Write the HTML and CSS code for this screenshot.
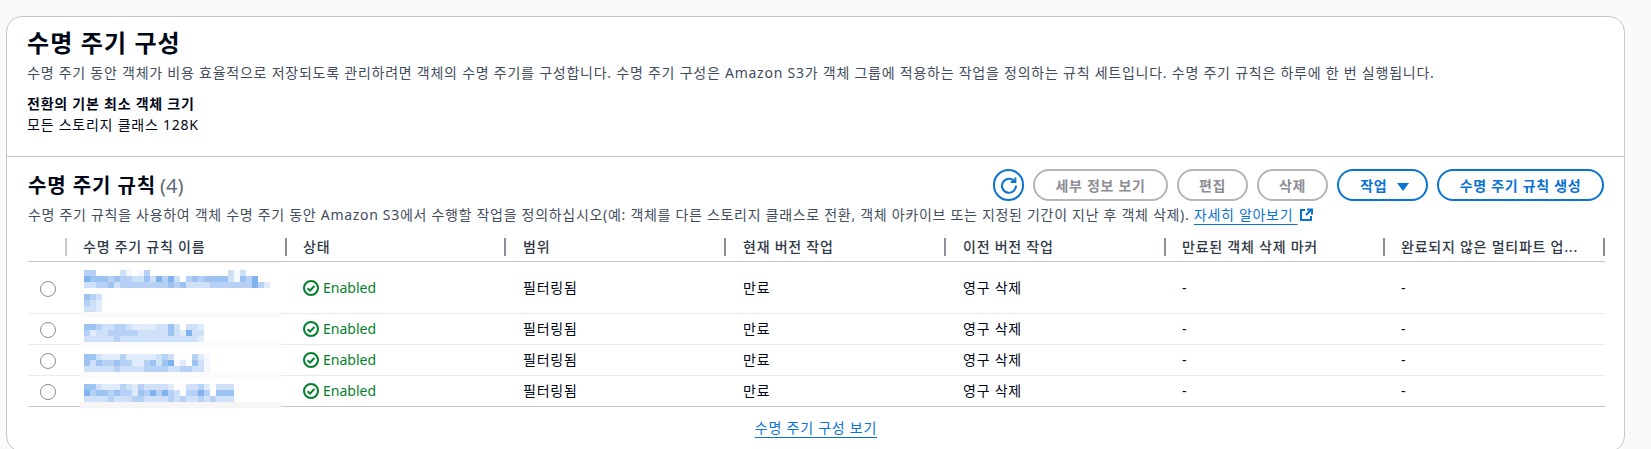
FILE: index.html

```html
<!DOCTYPE html>
<html lang="ko">
<head>
  <meta charset="UTF-8" />
  <meta name="viewport" content="width=device-width, initial-scale=1.0" />
  <title>수명 주기 구성</title>
  <link rel="stylesheet" href="styles.css">
</head>
<body>
  <div class="card">
    <div class="intro">
      <h1>수명 주기 구성</h1>
      <p class="desc">수명 주기 동안 객체가 비용 효율적으로 저장되도록 관리하려면 객체의 수명 주기를 구성합니다. 수명 주기 구성은 Amazon S3가 객체 그룹에 적용하는 작업을 정의하는 규칙 세트입니다. 수명 주기 규칙은 하루에 한 번 실행됩니다.</p>
      <div class="label">전환의 기본 최소 객체 크기</div>
      <div class="value">모든 스토리지 클래스 128K</div>
    </div>

    <div class="rules">
      <div class="rules-head">
        <h2>수명 주기 규칙 <span class="count">(4)</span></h2>
        <div class="actions">
          <button class="btn icon-btn" aria-label="새로 고침">
            <svg width="18" height="18" viewBox="0 0 18 18" fill="none" stroke="#0972d3" stroke-width="2"><path d="M14.6 5.6A7 7 0 1 0 16 9.5"/><path d="M15.4 1.5v4.6h-4.6" stroke-linejoin="miter"/></svg>
          </button>
          <button class="btn disabled details-btn">세부 정보 보기</button>
          <button class="btn disabled small-btn">편집</button>
          <button class="btn disabled small-btn">삭제</button>
          <button class="btn menu-btn">작업 <span class="caret"></span></button>
          <button class="btn create-btn">수명 주기 규칙 생성</button>
        </div>
      </div>
      <p class="desc rules-desc">수명 주기 규칙을 사용하여 객체 수명 주기 동안 Amazon S3에서 수행할 작업을 정의하십시오(예: 객체를 다른 스토리지 클래스로 전환, 객체 아카이브 또는 지정된 기간이 지난 후 객체 삭제). <a class="link" href="#">자세히 알아보기 </a><svg class="ext" width="14" height="14" viewBox="0 0 14 14" fill="none" stroke="#0972d3" stroke-width="2"><path d="M6 2H2v10h10V8"/><path d="M7 7l5.5-5.5M8 1.5h5v5"/></svg></p>

      <div class="table-wrap">
        <table class="rule-table">
          <colgroup>
            <col class="col-radio"><col class="col-wide"><col class="col-narrow"><col class="col-wide"><col class="col-wide"><col class="col-wide"><col class="col-narrow"><col class="col-wide">
          </colgroup>
          <thead>
            <tr>
              <th><span class="head-cell light"></span></th>
              <th><span class="head-cell">수명 주기 규칙 이름</span></th>
              <th><span class="head-cell">상태</span></th>
              <th><span class="head-cell nudge">범위</span></th>
              <th><span class="head-cell nudge">현재 버전 작업</span></th>
              <th><span class="head-cell nudge">이전 버전 작업</span></th>
              <th><span class="head-cell">만료된 객체 삭제 마커</span></th>
              <th><span class="head-cell">완료되지 않은 멀티파트 업...</span></th>
            </tr>
          </thead>
          <tbody>
            <tr class="tall">
              <td class="radio-cell"><span class="radio"></span></td>
              <td></td>
              <td><span class="status"><svg width="16" height="16" viewBox="0 0 16 16" fill="none" stroke="#037f2c" stroke-width="2"><circle cx="8" cy="8" r="7"/><path d="M4.6 8.2l2.4 2.4 4.4-4.6"/></svg>Enabled</span></td>
              <td class="nudge">필터링됨</td>
              <td class="nudge">만료</td>
              <td class="nudge">영구 삭제</td>
              <td>-</td>
              <td>-</td>
            </tr>
            <tr>
              <td class="radio-cell"><span class="radio"></span></td>
              <td></td>
              <td><span class="status"><svg width="16" height="16" viewBox="0 0 16 16" fill="none" stroke="#037f2c" stroke-width="2"><circle cx="8" cy="8" r="7"/><path d="M4.6 8.2l2.4 2.4 4.4-4.6"/></svg>Enabled</span></td>
              <td class="nudge">필터링됨</td>
              <td class="nudge">만료</td>
              <td class="nudge">영구 삭제</td>
              <td>-</td>
              <td>-</td>
            </tr>
            <tr>
              <td class="radio-cell"><span class="radio"></span></td>
              <td></td>
              <td><span class="status"><svg width="16" height="16" viewBox="0 0 16 16" fill="none" stroke="#037f2c" stroke-width="2"><circle cx="8" cy="8" r="7"/><path d="M4.6 8.2l2.4 2.4 4.4-4.6"/></svg>Enabled</span></td>
              <td class="nudge">필터링됨</td>
              <td class="nudge">만료</td>
              <td class="nudge">영구 삭제</td>
              <td>-</td>
              <td>-</td>
            </tr>
            <tr>
              <td class="radio-cell"><span class="radio"></span></td>
              <td></td>
              <td><span class="status"><svg width="16" height="16" viewBox="0 0 16 16" fill="none" stroke="#037f2c" stroke-width="2"><circle cx="8" cy="8" r="7"/><path d="M4.6 8.2l2.4 2.4 4.4-4.6"/></svg>Enabled</span></td>
              <td class="nudge">필터링됨</td>
              <td class="nudge">만료</td>
              <td class="nudge">영구 삭제</td>
              <td>-</td>
              <td>-</td>
            </tr>
          </tbody>
        </table>

        <!-- pixelated redaction laid over the rule names, coordinates are page pixels -->
        <svg class="mosaic" width="201" height="146" viewBox="80 262 201 146">
          <rect class="band" x="80" y="262" width="201" height="2"/>
          <rect class="band" x="80" y="312" width="201" height="6"/>
          <rect class="band" x="80" y="342" width="201" height="6"/>
          <rect class="band" x="80" y="372" width="201" height="6"/>
          <rect class="band dark" x="80" y="402" width="201" height="6"/>

          <rect class="b3" x="84" y="270" width="12"/><rect class="b2" x="120" y="270" width="6"/><rect class="b0" x="126" y="270" width="6"/><rect class="b0" x="138" y="270" width="6"/><rect class="b3" x="144" y="270" width="6"/><rect class="b2" x="228" y="270" width="6"/><rect class="b0" x="234" y="270" width="6"/><rect class="b2" x="240" y="270" width="6"/>
          <rect class="b5" x="84" y="276" width="6"/><rect class="b4" x="90" y="276" width="18"/><rect class="b3" x="108" y="276" width="6"/><rect class="b4" x="114" y="276" width="6"/><rect class="b3" x="120" y="276" width="12"/><rect class="b2" x="132" y="276" width="12"/><rect class="b4" x="144" y="276" width="6"/><rect class="b2" x="150" y="276" width="6"/><rect class="b5" x="156" y="276" width="6"/><rect class="b3" x="162" y="276" width="6"/><rect class="b5" x="168" y="276" width="6"/><rect class="b2" x="174" y="276" width="6"/><rect class="b3" x="186" y="276" width="6"/><rect class="b4" x="192" y="276" width="6"/><rect class="b3" x="198" y="276" width="6"/><rect class="b4" x="204" y="276" width="24"/><rect class="b2" x="228" y="276" width="6"/><rect class="b0" x="234" y="276" width="6"/><rect class="b4" x="240" y="276" width="6"/><rect class="b3" x="246" y="276" width="6"/><rect class="b5" x="252" y="276" width="6"/>
          <rect class="b2" x="84" y="282" width="12"/><rect class="b3" x="96" y="282" width="12"/><rect class="b4" x="108" y="282" width="6"/><rect class="b2" x="114" y="282" width="6"/><rect class="b3" x="120" y="282" width="48"/><rect class="b4" x="168" y="282" width="6"/><rect class="b3" x="174" y="282" width="6"/><rect class="b4" x="180" y="282" width="6"/><rect class="b2" x="186" y="282" width="24"/><rect class="b3" x="210" y="282" width="42"/><rect class="b5" x="252" y="282" width="6"/><rect class="b3" x="258" y="282" width="6"/><rect class="b1" x="264" y="282" width="6"/>
          <rect class="b4" x="84" y="294" width="6"/><rect class="b3" x="90" y="294" width="6"/><rect class="b2" x="96" y="294" width="6"/>
          <rect class="b3" x="84" y="300" width="6"/><rect class="b2" x="90" y="300" width="6"/><rect class="b1" x="96" y="300" width="6"/>
          <rect class="b2" x="84" y="306" width="12"/><rect class="b1" x="96" y="306" width="6"/>

          <rect class="b4" x="84" y="324" width="12"/><rect class="b3" x="96" y="324" width="6"/><rect class="b2" x="102" y="324" width="12"/><rect class="b3" x="114" y="324" width="12"/><rect class="b2" x="126" y="324" width="6"/><rect class="b1" x="132" y="324" width="24"/><rect class="b2" x="156" y="324" width="12"/><rect class="b4" x="168" y="324" width="6"/><rect class="b2" x="174" y="324" width="6"/><rect class="b2" x="186" y="324" width="12"/><rect class="b1" x="198" y="324" width="6"/>
          <rect class="b3" x="84" y="330" width="6"/><rect class="b1" x="90" y="330" width="6"/><rect class="b2" x="96" y="330" width="12"/><rect class="b3" x="108" y="330" width="30"/><rect class="b2" x="138" y="330" width="30"/><rect class="b4" x="168" y="330" width="6"/><rect class="b2" x="174" y="330" width="6"/><rect class="b1" x="180" y="330" width="6"/><rect class="b5" x="186" y="330" width="6"/><rect class="b2" x="192" y="330" width="12"/>
          <rect class="b2" x="84" y="336" width="30"/><rect class="b3" x="114" y="336" width="6"/><rect class="b2" x="120" y="336" width="78"/><rect class="b1" x="198" y="336" width="6"/>

          <rect class="b4" x="84" y="354" width="12"/><rect class="b2" x="96" y="354" width="6"/><rect class="b1" x="102" y="354" width="18"/><rect class="b3" x="120" y="354" width="6"/><rect class="b1" x="126" y="354" width="30"/><rect class="b2" x="156" y="354" width="6"/><rect class="b3" x="162" y="354" width="6"/><rect class="b2" x="168" y="354" width="6"/><rect class="b3" x="192" y="354" width="6"/><rect class="b1" x="198" y="354" width="6"/><rect class="b0" x="204" y="354" width="6"/>
          <rect class="b4" x="84" y="360" width="6"/><rect class="b2" x="90" y="360" width="6"/><rect class="b4" x="96" y="360" width="6"/><rect class="b3" x="102" y="360" width="12"/><rect class="b4" x="114" y="360" width="6"/><rect class="b3" x="120" y="360" width="12"/><rect class="b1" x="132" y="360" width="12"/><rect class="b3" x="144" y="360" width="6"/><rect class="b4" x="150" y="360" width="6"/><rect class="b2" x="156" y="360" width="6"/><rect class="b4" x="162" y="360" width="6"/><rect class="b5" x="168" y="360" width="6"/><rect class="b0" x="174" y="360" width="6"/><rect class="b1" x="180" y="360" width="6"/><rect class="b4" x="192" y="360" width="6"/><rect class="b2" x="198" y="360" width="6"/><rect class="b0" x="204" y="360" width="6"/>
          <rect class="b2" x="84" y="366" width="30"/><rect class="b3" x="114" y="366" width="6"/><rect class="b2" x="120" y="366" width="24"/><rect class="b3" x="144" y="366" width="24"/><rect class="b2" x="168" y="366" width="12"/><rect class="b3" x="180" y="366" width="12"/><rect class="b2" x="192" y="366" width="12"/><rect class="b0" x="204" y="366" width="6"/>

          <rect class="b4" x="84" y="384" width="12"/><rect class="b2" x="96" y="384" width="6"/><rect class="b1" x="102" y="384" width="18"/><rect class="b3" x="120" y="384" width="6"/><rect class="b2" x="126" y="384" width="6"/><rect class="b1" x="132" y="384" width="6"/><rect class="b3" x="138" y="384" width="6"/><rect class="b2" x="144" y="384" width="24"/><rect class="b1" x="168" y="384" width="6"/><rect class="b2" x="186" y="384" width="12"/><rect class="b3" x="198" y="384" width="6"/><rect class="b1" x="204" y="384" width="6"/><rect class="b2" x="216" y="384" width="18"/>
          <rect class="b5" x="84" y="390" width="6"/><rect class="b3" x="90" y="390" width="6"/><rect class="b4" x="96" y="390" width="12"/><rect class="b3" x="108" y="390" width="6"/><rect class="b4" x="114" y="390" width="6"/><rect class="b3" x="120" y="390" width="12"/><rect class="b1" x="132" y="390" width="6"/><rect class="b4" x="138" y="390" width="6"/><rect class="b3" x="144" y="390" width="6"/><rect class="b5" x="150" y="390" width="6"/><rect class="b3" x="156" y="390" width="6"/><rect class="b5" x="162" y="390" width="6"/><rect class="b3" x="168" y="390" width="6"/><rect class="b2" x="174" y="390" width="6"/><rect class="b3" x="186" y="390" width="12"/><rect class="b5" x="198" y="390" width="6"/><rect class="b3" x="204" y="390" width="6"/><rect class="b4" x="216" y="390" width="18"/>
          <rect class="b2" x="84" y="396" width="24"/><rect class="b3" x="108" y="396" width="6"/><rect class="b2" x="114" y="396" width="18"/><rect class="b3" x="132" y="396" width="12"/><rect class="b2" x="144" y="396" width="24"/><rect class="b3" x="168" y="396" width="6"/><rect class="b2" x="174" y="396" width="6"/><rect class="b3" x="180" y="396" width="6"/><rect class="b2" x="186" y="396" width="12"/><rect class="b3" x="198" y="396" width="6"/><rect class="b2" x="204" y="396" width="6"/><rect class="b3" x="210" y="396" width="6"/><rect class="b2" x="216" y="396" width="18"/>
        </svg>
      </div>

      <div class="table-foot"><a class="link" href="#">수명 주기 구성 보기</a></div>
    </div>
  </div>
</body>
</html>
```

FILE: styles.css

```css
html, body {
  height: 449px;
  overflow: hidden;
}
body {
  margin: 0;
  padding: 16px 0 0 6px;
  box-sizing: border-box;
  background: #fafafa;
  color: #000716;
  font-family: "Noto Sans", "Noto Sans CJK KR", sans-serif;
  font-size: 14px;
  line-height: 20px;
  letter-spacing: 0.76px;
}
.card {
  width: 1619px;
  height: 436px;
  box-sizing: border-box;
  background: white;
  border: 1px solid #c6c6cd;
  border-radius: 16px;
}
.intro {
  padding: 11px 20px 21px 20px;
  border-bottom: 1px solid #c6c6cd;
}
h1 {
  margin: 0 0 5px;
  font-size: 24px;
  line-height: 30px;
  font-weight: 700;
  letter-spacing: 1.1px;
}
.desc {
  margin: 0;
  color: #414d5c;
}
.label {
  margin-top: 11px;
  font-weight: 700;
}
.value {
  margin-top: 1px;
}
.rules {
  padding: 12px 20px 0 21px;
}
.rules-head {
  display: flex;
  justify-content: space-between;
  align-items: center;
}
h2 {
  margin: 0;
  padding-top: 2px;
  font-size: 20px;
  line-height: 26px;
  font-weight: 700;
  letter-spacing: 0.9px;
}
.count {
  margin-left: -2px;
  color: #5f6b7a;
  font-weight: 400;
  letter-spacing: 0;
}
.actions {
  display: flex;
  gap: 9px;
}
.btn {
  height: 32px;
  box-sizing: border-box;
  padding: 0;
  background: white;
  border: 2px solid #0972d3;
  border-radius: 20px;
  color: #0972d3;
  font-family: inherit;
  font-size: 14px;
  font-weight: 700;
  letter-spacing: 0.7px;
}
.btn.disabled {
  border-color: #b4b4bb;
  color: #8d8d94;
}
.icon-btn {
  width: 31px;
  display: flex;
  align-items: center;
  justify-content: center;
}
.details-btn { width: 135px; }
.small-btn { width: 71px; }
.menu-btn { width: 91px; padding-left: 4px; }
.create-btn { width: 167px; }
.caret {
  display: inline-block;
  width: 0;
  height: 0;
  margin-left: 5px;
  border-left: 6px solid transparent;
  border-right: 6px solid transparent;
  border-top: 8px solid #0972d3;
}
.rules-desc {
  margin-top: 4px;
  letter-spacing: 0.7px;
}
.link {
  color: #0972d3;
  text-decoration: underline;
  text-underline-offset: 4px;
}
.ext {
  margin-left: 1px;
  vertical-align: -2px;
}
.table-wrap {
  position: relative;
  width: 1577px;
  margin-top: 9px;
}
.rule-table {
  width: 1577px;
  table-layout: fixed;
  border-collapse: separate;
  border-spacing: 0;
}
.col-radio { width: 39px; }
.col-wide { width: 220px; }
.col-narrow { width: 219px; }
th {
  height: 28px;
  padding: 0 0 5px;
  box-sizing: border-box;
  border-bottom: 1px solid #c6c6cd;
  text-align: left;
  vertical-align: bottom;
  font-weight: 500;
  color: #2f3a47;
}
.head-cell {
  display: block;
  height: 18px;
  line-height: 18px;
  padding-left: 16px;
  border-right: 2px solid #8d8d99;
  white-space: nowrap;
  overflow: hidden;
}
.head-cell.light {
  padding-left: 0;
  border-right-color: #c6c6cd;
}
.head-cell.nudge {
  padding-left: 17px;
}
td {
  height: 31px;
  box-sizing: border-box;
  padding: 0 0 0 16px;
  border-bottom: 1px solid #e9ebed;
}
td.nudge {
  padding-left: 17px;
}
tbody tr:last-child td {
  border-bottom-color: #c6c6cd;
}
tr.tall td {
  height: 52px;
}
.radio-cell {
  padding: 0;
  text-align: center;
}
.radio {
  display: inline-block;
  width: 16px;
  height: 16px;
  box-sizing: border-box;
  border: 1px solid #8c8c94;
  border-radius: 50%;
  vertical-align: middle;
}
.status {
  display: flex;
  align-items: center;
  gap: 4px;
  color: #037f2c;
  letter-spacing: 0;
}
.mosaic {
  position: absolute;
  left: 52px;
  top: 28px;
}
.mosaic rect { height: 6px; }
.mosaic .band { fill: #fbfbfb; }
.mosaic .band:first-child { height: 2px; }
.mosaic .band.dark { fill: #f5f5f5; }
.b0 { fill: #f4f8fe; }
.b1 { fill: #e0ebfb; }
.b2 { fill: #cfe1f9; }
.b3 { fill: #b6d1f5; }
.b4 { fill: #9cc3f2; }
.b5 { fill: #80b2ee; }
.table-foot {
  padding-top: 11px;
  text-align: center;
}
```
